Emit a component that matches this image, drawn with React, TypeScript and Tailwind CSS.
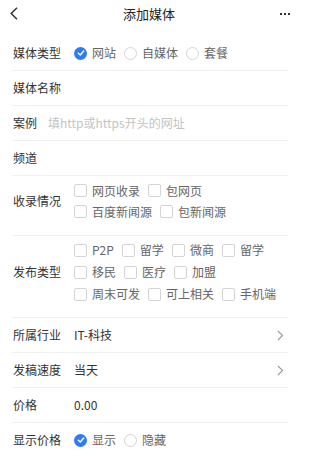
import React from 'react';

const font = { fontFamily: '"Noto Sans CJK SC", "Noto Sans", sans-serif' };

function Radio({ checked, label }: { checked?: boolean; label: string }) {
  return (
    <div className="flex items-center gap-[5px]">
      {checked ? (
        <span className="flex h-[13px] w-[13px] items-center justify-center rounded-full bg-[#2f7bf0]">
          <svg width="8" height="8" viewBox="0 0 8 8">
            <polyline points="1.3,4.2 3.3,6 6.7,2" fill="none" stroke="#fff" strokeWidth="1.4" strokeLinecap="round" strokeLinejoin="round" />
          </svg>
        </span>
      ) : (
        <span className="h-[13px] w-[13px] rounded-full border border-[#d6d6d6] bg-white" />
      )}
      <span className="text-[12px] text-[#666]">{label}</span>
    </div>
  );
}

function Check({ label }: { label: string }) {
  return (
    <div className="flex items-center gap-[5px]">
      <span className="h-[13px] w-[13px] rounded-[2px] border border-[#d4d4d4] bg-white" />
      <span className="text-[12px] text-[#666]">{label}</span>
    </div>
  );
}

function Chevron() {
  return (
    <svg width="7" height="11" viewBox="0 0 7 11" className="ml-auto mr-[4px]">
      <polyline points="1,1 5.5,5.5 1,10" fill="none" stroke="#9a9a9a" strokeWidth="1.1" />
    </svg>
  );
}

function Row({ label, children }: { label: string; children?: React.ReactNode }) {
  return (
    <div className="flex h-[35px] items-center border-b border-[#f1f1f1]">
      <span className="w-[62px] shrink-0 pl-[1px] text-[12px] text-[#333]">{label}</span>
      {children}
    </div>
  );
}

export default function App() {
  return (
    <div className="h-[453px] w-[300px] overflow-hidden bg-white" style={font}>
      <div className="h-[36px]">
        <div className="flex h-[27px] items-center px-[10px]">
          <svg width="8" height="13" viewBox="0 0 8 13">
            <polyline points="7,0.8 1.2,6.5 7,12.2" fill="none" stroke="#333" strokeWidth="1.5" />
          </svg>
          <span className="flex-1 text-center text-[13px] text-[#222]">添加媒体</span>
          <div className="flex items-center gap-[2px]">
            <span className="h-[2px] w-[2px] bg-[#333]" />
            <span className="h-[2px] w-[2px] bg-[#333]" />
            <span className="h-[2px] w-[2px] bg-[#333]" />
          </div>
        </div>
      </div>

      <div className="mx-[12px]">
        <Row label="媒体类型">
          <div className="flex items-center gap-[8px]">
            <Radio checked label="网站" />
            <Radio label="自媒体" />
            <Radio label="套餐" />
          </div>
        </Row>
        <Row label="媒体名称" />
        <div className="flex h-[35px] items-center border-b border-[#f1f1f1]">
          <span className="pl-[1px] text-[12px] text-[#333]">案例</span>
          <span className="ml-[11px] text-[12px] text-[#c4c4c4]">填http或https开头的网址</span>
        </div>
        <Row label="频道" />

        <div className="flex items-center border-b border-[#f1f1f1] pt-[4px] pb-[13px]">
          <span className="w-[62px] shrink-0 pl-[1px] text-[12px] text-[#333]">收录情况</span>
          <div className="flex flex-col">
            <div className="flex h-[21px] items-center gap-[8px]">
              <Check label="网页收录" />
              <Check label="包网页" />
            </div>
            <div className="flex h-[21px] items-center gap-[8px]">
              <Check label="百度新闻源" />
              <Check label="包新闻源" />
            </div>
          </div>
        </div>

        <div className="flex items-center border-b border-[#f1f1f1] pt-[3px] pb-[12px]">
          <span className="w-[62px] shrink-0 pl-[1px] text-[12px] text-[#333]">发布类型</span>
          <div className="flex flex-col">
            <div className="flex h-[22px] items-center gap-[8px]">
              <Check label="P2P" />
              <Check label="留学" />
              <Check label="微商" />
              <Check label="留学" />
            </div>
            <div className="flex h-[22px] items-center gap-[8px]">
              <Check label="移民" />
              <Check label="医疗" />
              <Check label="加盟" />
            </div>
            <div className="flex h-[22px] items-center gap-[8px]">
              <Check label="周末可发" />
              <Check label="可上相关" />
              <Check label="手机端" />
            </div>
          </div>
        </div>

        <Row label="所属行业">
          <span className="text-[12px] text-[#333]">IT-科技</span>
          <Chevron />
        </Row>
        <Row label="发稿速度">
          <span className="text-[12px] text-[#333]">当天</span>
          <Chevron />
        </Row>
        <Row label="价格">
          <span className="text-[12px] text-[#333]">0.00</span>
        </Row>
        <Row label="显示价格">
          <div className="flex items-center gap-[8px]">
            <Radio checked label="显示" />
            <Radio label="隐藏" />
          </div>
        </Row>
      </div>
    </div>
  );
}
